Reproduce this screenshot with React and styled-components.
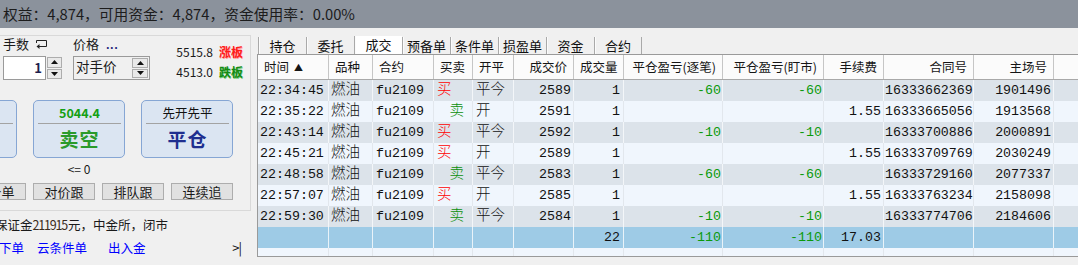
import React from "react";
import styled, { createGlobalStyle } from "styled-components";

const Global = createGlobalStyle`
  html, body { margin: 0; padding: 0; background: #f0f0f0; overflow: hidden; }
  body { font-family: "Noto Sans CJK SC", "Noto Sans", sans-serif; color: #1a1a1a; }
  * { box-sizing: border-box; }
`;

const Page = styled.div`
  width: 1078px;
  height: 265px;
  display: flex;
  flex-direction: column;
  background: #f0f0f0;
  overflow: hidden;
`;

const TopBar = styled.div`
  height: 28px;
  flex: none;
  background: #8b929c;
  color: #1c1c1c;
  font-size: 14.75px;
  line-height: 28px;
  padding-left: 3px;
  white-space: nowrap;
`;

const Main = styled.div`
  display: flex;
  flex: 1;
  min-height: 0;
`;

/* ---------- left pane ---------- */
const LeftPane = styled.div`
  width: 257px;
  flex: none;
  display: flex;
  flex-direction: column;
  overflow: hidden;
  padding-top: 7px;
`;

const GroupBox = styled.div`
  width: 251px;
  height: 176px;
  border: 1px solid #d9d9d9;
  border-left: none;
  display: flex;
  flex-direction: column;
  overflow: hidden;
`;

const TopSection = styled.div`
  display: flex;
  height: 45px;
  padding-left: 3px;
`;

const Field = styled.div`
  display: flex;
  flex-direction: column;
  width: ${(p) => p.$w}px;
  margin-left: ${(p) => p.$ml || 0}px;
`;

const Label = styled.div`
  display: flex;
  align-items: center;
  gap: 6px;
  font-size: 13px;
  line-height: 16px;
  height: 16px;
  margin-bottom: 4px;
  white-space: nowrap;
`;

const Dots = styled.span`
  color: #1b1b7a;
  font-weight: bold;
  font-size: 11px;
  line-height: 16px;
  letter-spacing: 0.5px;
  margin-left: 1px;
`;

const SpinField = styled.div`
  display: flex;
  height: 24px;
`;

const NumberBox = styled.div`
  flex: 1;
  background: #fff;
  border: 1px solid #9a9a9a;
  text-align: right;
  padding-right: 3px;
  font-size: 13px;
  font-weight: bold;
  color: #1e1e4e;
  line-height: 22px;
`;

const Combo = styled.div`
  flex: 1;
  display: flex;
  background: #f0f0f0;
  border: 1px solid #9a9a9a;
  padding: 1px 1px 1px 2px;
  font-size: 13.5px;
  line-height: 17px;
`;

const ComboText = styled.div`
  flex: 1;
`;

const SpinBox = styled.div`
  width: 16px;
  display: flex;
  flex-direction: column;
  gap: 1px;
  padding: ${(p) => (p.$inner ? "0" : "1px 0 1px 1px")};
`;

const SpinBtn = styled.div`
  flex: 1;
  background: #e9e9e9;
  border: 1px solid #adadad;
  display: flex;
  align-items: center;
  justify-content: center;
`;

const Tri = ({ down }) => (
  <svg width="7" height="4" viewBox="0 0 7 4">
    <path d={down ? "M0 0 H7 L3.5 4 Z" : "M0 4 H7 L3.5 0 Z"} fill="#111" />
  </svg>
);

const Spinner = ({ inner }) => (
  <SpinBox $inner={inner}>
    <SpinBtn>
      <Tri />
    </SpinBtn>
    <SpinBtn>
      <Tri down />
    </SpinBtn>
  </SpinBox>
);

const ReturnIcon = () => (
  <svg width="13" height="11" viewBox="0 0 13 11">
    <path d="M1.5 4 V1.5 H11.5 V7.5 H4" fill="none" stroke="#222" strokeWidth="1" />
    <path d="M1.5 7.5 L4.5 5 V10 Z" fill="#222" />
  </svg>
);

const Limits = styled.div`
  margin-left: auto;
  padding-right: 7px;
  margin-top: 5px;
  display: flex;
  flex-direction: column;
`;

const LimitLine = styled.div`
  display: flex;
  align-items: center;
  gap: 6px;
  height: 24px;
  font-size: 12px;
  color: #1a1a1a;
`;

const LimitTag = styled.span`
  font-weight: bold;
  color: ${(p) => p.$c};
  text-shadow: 0.5px 0.5px 0 ${(p) => p.$s};
`;

const ActionRow = styled.div`
  display: flex;
  gap: 16px;
  margin-left: -75px;
  margin-top: 19px;
`;

const ActionBtn = styled.div`
  width: 92px;
  height: 58px;
  flex: none;
  border: 1px solid #86a6d4;
  border-radius: 5px;
  background: #dbe5f2;
  display: flex;
  flex-direction: column;
  align-items: center;
  padding: 4px 3px 0 4px;
`;

const ActionTop = styled.div`
  font-size: 12.5px;
  font-weight: ${(p) => (p.$bold ? "bold" : "normal")};
  color: ${(p) => p.$c};
  line-height: 16px;
  height: 16px;
`;

const ActionRule = styled.div`
  align-self: stretch;
  height: 1px;
  background: #a3a3a3;
  margin-top: 2px;
`;

const ActionMain = styled.div`
  font-size: 19px;
  font-weight: bold;
  line-height: 30px;
  height: 30px;
  color: ${(p) => p.$c};
  letter-spacing: 1px;
`;

const Caption = styled.div`
  width: 92px;
  margin-left: 33px;
  margin-top: 4px;
  text-align: center;
  font-size: 12px;
  line-height: 14px;
`;

const SmallRow = styled.div`
  display: flex;
  gap: 7px;
  margin-left: -36px;
  margin-top: 7px;
`;

const SmallBtn = styled.div`
  width: 62px;
  height: 17px;
  flex: none;
  background: #e1e1e1;
  border: 1px solid #adadad;
  font-size: 13px;
  line-height: 15px;
  text-align: center;
  white-space: nowrap;
`;

const InfoLine = styled.div`
  margin-top: 6px;
  margin-left: -5px;
  font-size: 12.5px;
  line-height: 16px;
  white-space: nowrap;
`;

const Digits = styled.span`
  color: #3b2b1b;
  letter-spacing: -1.2px;
  margin-right: 1px;
`;

const LinkRow = styled.div`
  display: grid;
  grid-template-columns: 38px 71px 1fr auto;
  margin-top: 7px;
  margin-left: -1px;
  padding-right: 16px;
  font-size: 12.5px;
  line-height: 16px;
`;

const Link = styled.span`
  color: #0000ff;
  white-space: nowrap;
`;

const EndMark = styled.span`
  color: #111;
  font-size: 13px;
  letter-spacing: -1px;
`;

/* ---------- right pane ---------- */
const RightPane = styled.div`
  flex: 1;
  min-width: 0;
  display: flex;
  flex-direction: column;
  padding-top: 9px;
`;

const TabStrip = styled.div`
  display: flex;
  height: 17px;
  margin-left: 1px;
  align-items: flex-end;
`;

const Tab = styled.div`
  width: 48px;
  height: ${(p) => (p.$active ? "18px" : "17px")};
  flex: none;
  border-left: 1px solid #a9a9a9;
  border-right: ${(p) => (p.$last ? "1px solid #a9a9a9" : "none")};
  box-shadow: inset 1px 0 0 #fbfbfb;
  background: ${(p) => (p.$active ? "#ffffff" : "#f0f0f0")};
  font-size: 13px;
  line-height: ${(p) => (p.$active ? "18px" : "17px")};
  text-align: center;
  color: #111;
`;

const TableBox = styled.div`
  height: 203px;
  border: 1px solid #9a9a9a;
  border-right: none;
  display: flex;
  flex-direction: column;
  overflow: hidden;
`;

const COLS = "71px 44px 61px 39px 41px 60px 50px 99px 101px 60px 90px 80px 1fr";

const HeadRow = styled.div`
  display: grid;
  grid-template-columns: ${COLS};
  height: 25px;
  flex: none;
  background: #fbfbfb;
  border-bottom: 1px solid #a8a8a8;
`;

const HeadCell = styled.div`
  font-size: 12.5px;
  line-height: 24px;
  padding: 0 6px;
  text-align: ${(p) => p.$align};
  border-right: ${(p) => (p.$filler ? "none" : "1px solid #c6c6c6")};
  white-space: nowrap;
  overflow: hidden;
  color: #151515;
`;

const SortMark = styled.span`
  font-size: 9px;
  margin-left: 5px;
  vertical-align: 1px;
`;

const ROW_BG = { odd: "#dce3ea", even: "#f0f6fd", total: "#9ecbe6" };
const ROW_LINE = { odd: "#f3f6f9", even: "#e2e7ed", total: "#e9f3f9" };

const BodyRow = styled.div`
  display: grid;
  grid-template-columns: ${COLS};
  height: ${(p) => (p.$short ? 8 : 21)}px;
  flex: none;
  background: ${(p) => ROW_BG[p.$kind]};
`;

const Cell = styled.div`
  font-family: "Liberation Mono", "Noto Sans CJK SC", monospace;
  font-size: ${(p) => (p.$cjk ? "14.5px" : "13.3px")};
  font-weight: ${(p) => (p.$cjk ? 300 : "normal")};
  line-height: 21px;
  padding: ${(p) => p.$pad || "0 2px"};
  text-align: ${(p) => p.$align};
  color: ${(p) => p.$color || "#111"};
  border-right: ${(p) => (p.$filler ? "none" : `1px solid ${ROW_LINE[p.$kind]}`)};
  white-space: nowrap;
  overflow: hidden;
`;

const COLUMNS = [
  { h: "时间", sort: true, ha: "left", a: "left" },
  { h: "品种", ha: "left", a: "left", cjk: true },
  { h: "合约", ha: "left", a: "left", pad: "0 3px" },
  { h: "买卖", ha: "left", a: "left", cjk: true },
  { h: "开平", ha: "left", a: "left", cjk: true, pad: "0 3px" },
  { h: "成交价", ha: "right", a: "right" },
  { h: "成交量", ha: "right", a: "right", pad: "0 3px" },
  { h: "平仓盈亏(逐笔)", ha: "right", a: "right", pad: "0 1px" },
  { h: "平仓盈亏(盯市)", ha: "right", a: "right", pad: "0 1px" },
  { h: "手续费", ha: "right", a: "right", pad: "0 2px" },
  { h: "合同号", ha: "right", a: "right", pad: "0 1px" },
  { h: "主场号", ha: "right", a: "right", pad: "0 2px" },
  { h: "", ha: "left", a: "left", filler: true },
];

const TRADES = [
  ["22:34:45", "买", "平今", "2589", "-60", "", "16333662369", "1901496"],
  ["22:35:22", "卖", "开", "2591", "", "1.55", "16333665056", "1913568"],
  ["22:43:14", "买", "平今", "2592", "-10", "", "16333700886", "2000891"],
  ["22:45:21", "买", "开", "2589", "", "1.55", "16333709769", "2030249"],
  ["22:48:58", "卖", "平今", "2583", "-60", "", "16333729160", "2077337"],
  ["22:57:07", "买", "开", "2585", "", "1.55", "16333763234", "2158098"],
  ["22:59:30", "卖", "平今", "2584", "-10", "", "16333774706", "2184606"],
];

const GREEN = "#0a9a0a";

function tradeCells([time, side, oc, price, pnl, fee, contract, seat]) {
  return [
    { v: time },
    { v: "燃油" },
    { v: "fu2109" },
    side === "买"
      ? { v: "买", color: "#ff0000", pad: "0 3px" }
      : { v: "卖", color: "#0b8f0b", align: "right", pad: "0 8px 0 0" },
    { v: oc },
    { v: price },
    { v: "1" },
    { v: pnl, color: GREEN },
    { v: pnl, color: GREEN },
    { v: fee },
    { v: contract },
    { v: seat },
    { v: "" },
  ];
}

const TOTAL = ["", "", "", "", "", "", "22", "-110", "-110", "17.03", "", "", ""];

function Row({ cells, kind, short }) {
  return (
    <BodyRow $kind={kind} $short={short}>
      {COLUMNS.map((c, i) => {
        const cell = cells[i] || { v: "" };
        return (
          <Cell
            key={i}
            $kind={kind}
            $cjk={c.cjk}
            $align={cell.align || c.a}
            $pad={cell.pad || c.pad}
            $color={cell.color}
            $filler={c.filler}
          >
            {cell.v}
          </Cell>
        );
      })}
    </BodyRow>
  );
}

const TABS = ["持仓", "委托", "成交", "预备单", "条件单", "损盈单", "资金", "合约"];

export default function App() {
  return (
    <Page>
      <Global />
      <TopBar>权益：4,874，可用资金：4,874，资金使用率：0.00%</TopBar>
      <Main>
        <LeftPane>
          <GroupBox>
            <TopSection>
              <Field $w={59}>
                <Label>
                  手数 <ReturnIcon />
                </Label>
                <SpinField>
                  <NumberBox>1</NumberBox>
                  <Spinner />
                </SpinField>
              </Field>
              <Field $w={77} $ml={11}>
                <Label>
                  <span>价格</span>
                  <Dots>...</Dots>
                </Label>
                <SpinField>
                  <Combo>
                    <ComboText>对手价</ComboText>
                    <Spinner inner />
                  </Combo>
                </SpinField>
              </Field>
              <Limits>
                <LimitLine>
                  5515.8 <LimitTag $c="#ff1a1a" $s="#ff9a9a">涨板</LimitTag>
                </LimitLine>
                <LimitLine>
                  4513.0 <LimitTag $c="#138a13" $s="#7ad07a">跌板</LimitTag>
                </LimitLine>
              </Limits>
            </TopSection>

            <ActionRow>
              <ActionBtn>
                <ActionTop />
                <ActionRule />
                <ActionMain />
              </ActionBtn>
              <ActionBtn>
                <ActionTop $bold $c="#13a013">5044.4</ActionTop>
                <ActionRule />
                <ActionMain $c="#2a9a2a">卖空</ActionMain>
              </ActionBtn>
              <ActionBtn>
                <ActionTop $c="#111">先开先平</ActionTop>
                <ActionRule />
                <ActionMain $c="#1f2f8f">平仓</ActionMain>
              </ActionBtn>
            </ActionRow>
            <Caption>&lt;= 0</Caption>
            <SmallRow>
              <SmallBtn>市价单</SmallBtn>
              <SmallBtn>对价跟</SmallBtn>
              <SmallBtn>排队跟</SmallBtn>
              <SmallBtn>连续追</SmallBtn>
            </SmallRow>
          </GroupBox>
          <InfoLine>
            保证金<Digits>211915</Digits>元，中金所，闭市
          </InfoLine>
          <LinkRow>
            <Link>下单</Link>
            <Link>云条件单</Link>
            <Link>出入金</Link>
            <EndMark>&gt;|</EndMark>
          </LinkRow>
        </LeftPane>

        <RightPane>
          <TabStrip>
            {TABS.map((t, i) => (
              <Tab key={t} $active={t === "成交"} $last={i === TABS.length - 1}>
                {t}
              </Tab>
            ))}
          </TabStrip>
          <TableBox>
            <HeadRow>
              {COLUMNS.map((c, i) => (
                <HeadCell key={i} $align={c.ha} $filler={c.filler}>
                  {c.h}
                  {c.sort && <SortMark>▲</SortMark>}
                </HeadCell>
              ))}
            </HeadRow>
            {TRADES.map((t, i) => (
              <Row key={i} cells={tradeCells(t)} kind={i % 2 === 0 ? "odd" : "even"} />
            ))}
            <Row
              kind="total"
              cells={TOTAL.map((v, i) => ({ v, color: i === 7 || i === 8 ? GREEN : undefined }))}
            />
            <Row kind="even" short cells={[]} />
          </TableBox>
        </RightPane>
      </Main>
    </Page>
  );
}
